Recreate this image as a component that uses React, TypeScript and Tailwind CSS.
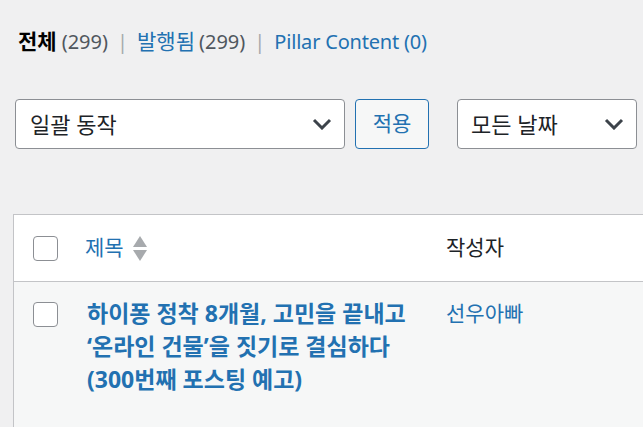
import React from "react";

const font = { fontFamily: '"Noto Sans", "Noto Sans CJK KR", sans-serif' };

function Chevron() {
  return (
    <svg width="20" height="12" viewBox="0 0 20 12" className="shrink-0">
      <path d="M2 2l8 8 8-8" fill="none" stroke="#3c434a" strokeWidth="3" />
    </svg>
  );
}

function Checkbox() {
  return <div className="w-[25px] h-[25px] rounded-[4px] border border-[#8c8f94] bg-white shrink-0" />;
}

export default function App() {
  return (
    <div className="w-[643px] h-[427px] overflow-hidden bg-[#f0f0f1] text-[#1d2327] [word-break:keep-all]" style={font}>
      {/* Status links */}
      <div className="pl-[18px] pt-[25px] h-[99px] text-[20px] leading-[32px] flex items-baseline">
        <span className="font-bold text-black text-[21px]">전체</span>
        <span className="text-[#50575e] ml-[5px]">(299)</span>
        <span className="text-[#a7aaad] mx-[9px]">|</span>
        <span className="text-[#2271b1] text-[21px]">발행됨</span>
        <span className="text-[#50575e] ml-[4px]">(299)</span>
        <span className="text-[#a7aaad] mx-[9px]">|</span>
        <span className="text-[#2271b1] tracking-[-0.2px]">Pillar Content (0)</span>
      </div>

      {/* Bulk actions */}
      <div className="flex items-center pl-[15px] h-[50px]">
        <div className="w-[330px] h-[50px] flex items-center justify-between pl-[14px] pr-[12px] bg-white border border-[#8c8f94] rounded-[4px] text-[22px]">
          <span>일괄 동작</span>
          <Chevron />
        </div>
        <div className="ml-[10px] w-[74px] h-[50px] flex items-center justify-center bg-[#f6f7f7] border border-[#2271b1] rounded-[4px] text-[#2271b1] text-[21px]">
          적용
        </div>
        <div className="ml-[28px] w-[180px] h-[50px] flex items-center justify-between pl-[13px] pr-[12px] bg-white border border-[#8c8f94] rounded-[4px] text-[22px]">
          <span>모든 날짜</span>
          <Chevron />
        </div>
      </div>

      {/* Table */}
      <div className="mt-[65px] ml-[13px] w-[700px] border-t border-l border-[#c3c4c7]">
        <div className="h-[67px] bg-white border-b border-[#c3c4c7] flex items-center">
          <div className="w-[71px] pl-[19px]">
            <Checkbox />
          </div>
          <div className="w-[361px] flex items-center text-[#2271b1] text-[21px]">
            <span>제목</span>
            <svg width="14" height="25" viewBox="0 0 14 25" className="ml-[9px]">
              <path d="M7 0 L14 11 L0 11 Z" fill="#a7aaad" />
              <path d="M0 14 L14 14 L7 25 Z" fill="#a7aaad" />
            </svg>
          </div>
          <div className="text-[21px]">작성자</div>
        </div>
        <div className="h-[200px] bg-[#f6f7f7] flex items-start pt-[20px]">
          <div className="w-[71px] pl-[19px]">
            <Checkbox />
          </div>
          <div className="w-[361px] -mt-[5px] pl-[2px] text-[#2271b1] font-bold text-[23px] leading-[33px] pr-[10px]">
            하이퐁 정착 8개월, 고민을 끝내고 ‘온라인 건물’을 짓기로 결심하다 (300번째 포스팅 예고)
          </div>
          <div className="-mt-[5px] text-[#2271b1] text-[21px] leading-[33px]">선우아빠</div>
        </div>
      </div>
    </div>
  );
}
